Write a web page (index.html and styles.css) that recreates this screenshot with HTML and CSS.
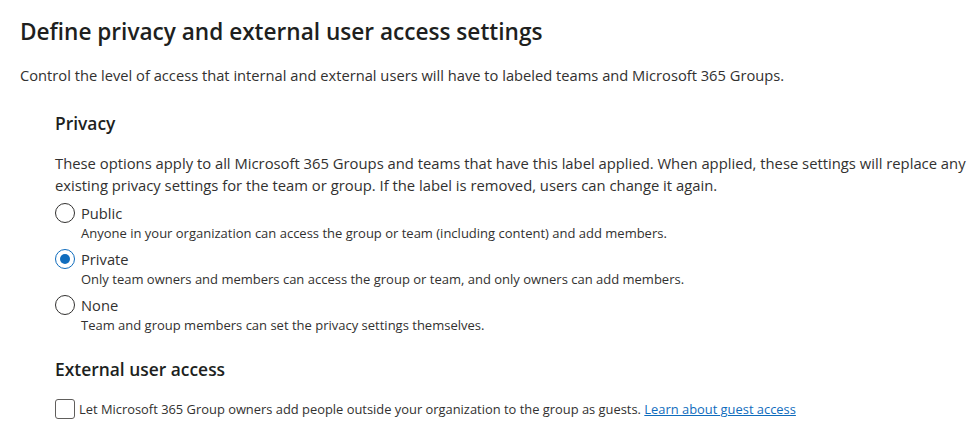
FILE: index.html
```html
<!DOCTYPE html>
<html lang="en">
<head>
    <meta charset="UTF-8">
    <title>Define privacy and external user access settings</title>
    <link rel="stylesheet" href="styles.css">
</head>
<body>
    <div class="page">
        <h1 class="title">Define privacy and external user access settings</h1>
        <p class="intro">Control the level of access that internal and external users will have to labeled teams and Microsoft 365 Groups.</p>

        <section class="group">
            <h2 class="group-title">Privacy</h2>
            <p class="group-text">These options apply to all Microsoft 365 Groups and teams that have this label applied. When applied, these settings will replace any existing privacy settings for the team or group. If the label is removed, users can change it again.</p>

            <div class="options">
                <div class="option">
                    <span class="radio"></span>
                    <div class="option-body">
                        <div class="option-label">Public</div>
                        <div class="option-desc">Anyone in your organization can access the group or team (including content) and add members.</div>
                    </div>
                </div>
                <div class="option">
                    <span class="radio checked"></span>
                    <div class="option-body">
                        <div class="option-label">Private</div>
                        <div class="option-desc">Only team owners and members can access the group or team, and only owners can add members.</div>
                    </div>
                </div>
                <div class="option">
                    <span class="radio"></span>
                    <div class="option-body">
                        <div class="option-label">None</div>
                        <div class="option-desc">Team and group members can set the privacy settings themselves.</div>
                    </div>
                </div>
            </div>
        </section>

        <section class="group">
            <h2 class="group-title external">External user access</h2>
            <div class="check-row">
                <span class="checkbox"></span>
                <span class="check-label">Let Microsoft 365 Group owners add people outside your organization to the group as guests. <a href="#" class="link">Learn about guest access</a></span>
            </div>
        </section>
    </div>
</body>
</html>
```

FILE: styles.css
```css
body {
    margin: 0;
    background: #ffffff;
    font-family: 'Open Sans', 'Noto Sans', sans-serif;
    color: #323130;
}

.page {
    padding: 17px 10px 0 20px;
}

.title {
    font-size: 22.6px;
    font-weight: 600;
    color: #201f1e;
    margin: 0;
    line-height: 30px;
}

.intro {
    font-size: 14.7px;
    line-height: 20px;
    margin: 18px 0 0 0;
}

.group {
    padding-left: 35px;
}

.group-title {
    font-size: 17.4px;
    font-weight: 600;
    color: #201f1e;
    margin: 27px 0 0 0;
    line-height: 22px;
}

.group-title.external {
    margin-top: 24px;
}

.group-text {
    font-size: 14.8px;
    line-height: 22px;
    margin: 18px 0 0 0;
}

.options {
    display: flex;
    flex-direction: column;
    gap: 7px;
    margin-top: 7px;
}

.option {
    display: flex;
    gap: 6px;
    font-size: 14.7px;
}

.radio {
    width: 20px;
    height: 20px;
    border: 1px solid #323130;
    border-radius: 50%;
    box-sizing: border-box;
    flex-shrink: 0;
    display: flex;
    align-items: center;
    justify-content: center;
}

.radio.checked {
    border-color: #0f6cbd;
}

.radio.checked::after {
    content: "";
    width: 10px;
    height: 10px;
    border-radius: 50%;
    background: #0f6cbd;
}

.option-label {
    line-height: 21px;
}

.option-desc {
    font-size: 13px;
    line-height: 18px;
}

.check-row {
    display: flex;
    align-items: center;
    gap: 4px;
    margin-top: 19px;
    font-size: 12.9px;
}

.checkbox {
    width: 20px;
    height: 20px;
    border: 1px solid #605e5c;
    border-radius: 3px;
    box-sizing: border-box;
    flex-shrink: 0;
}

.link {
    color: #0f6cbd;
}
```
